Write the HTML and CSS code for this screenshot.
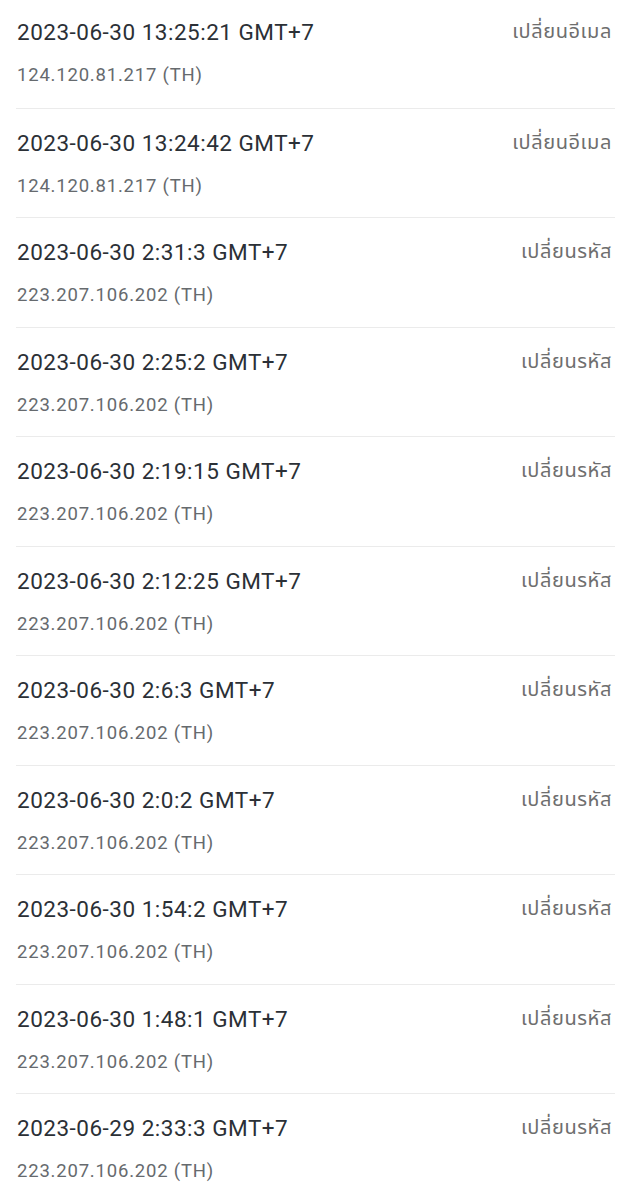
FILE: index.html
```html
<!DOCTYPE html>
<html lang="th">
<head>
    <meta charset="UTF-8">
    <meta name="viewport" content="width=device-width, initial-scale=1.0">
    <title>Login history</title>
    <link rel="stylesheet" href="styles.css">
</head>
<body>
    <div class="history">
        <div class="entry">
            <div class="entry-top">
                <span class="time">2023-06-30 13:25:21 GMT+7</span>
                <span class="action">เปลี่ยนอีเมล</span>
            </div>
            <div class="ip">124.120.81.217 (TH)</div>
        </div>
        <div class="entry">
            <div class="entry-top">
                <span class="time">2023-06-30 13:24:42 GMT+7</span>
                <span class="action">เปลี่ยนอีเมล</span>
            </div>
            <div class="ip">124.120.81.217 (TH)</div>
        </div>
        <div class="entry">
            <div class="entry-top">
                <span class="time">2023-06-30 2:31:3 GMT+7</span>
                <span class="action">เปลี่ยนรหัส</span>
            </div>
            <div class="ip">223.207.106.202 (TH)</div>
        </div>
        <div class="entry">
            <div class="entry-top">
                <span class="time">2023-06-30 2:25:2 GMT+7</span>
                <span class="action">เปลี่ยนรหัส</span>
            </div>
            <div class="ip">223.207.106.202 (TH)</div>
        </div>
        <div class="entry">
            <div class="entry-top">
                <span class="time">2023-06-30 2:19:15 GMT+7</span>
                <span class="action">เปลี่ยนรหัส</span>
            </div>
            <div class="ip">223.207.106.202 (TH)</div>
        </div>
        <div class="entry">
            <div class="entry-top">
                <span class="time">2023-06-30 2:12:25 GMT+7</span>
                <span class="action">เปลี่ยนรหัส</span>
            </div>
            <div class="ip">223.207.106.202 (TH)</div>
        </div>
        <div class="entry">
            <div class="entry-top">
                <span class="time">2023-06-30 2:6:3 GMT+7</span>
                <span class="action">เปลี่ยนรหัส</span>
            </div>
            <div class="ip">223.207.106.202 (TH)</div>
        </div>
        <div class="entry">
            <div class="entry-top">
                <span class="time">2023-06-30 2:0:2 GMT+7</span>
                <span class="action">เปลี่ยนรหัส</span>
            </div>
            <div class="ip">223.207.106.202 (TH)</div>
        </div>
        <div class="entry">
            <div class="entry-top">
                <span class="time">2023-06-30 1:54:2 GMT+7</span>
                <span class="action">เปลี่ยนรหัส</span>
            </div>
            <div class="ip">223.207.106.202 (TH)</div>
        </div>
        <div class="entry">
            <div class="entry-top">
                <span class="time">2023-06-30 1:48:1 GMT+7</span>
                <span class="action">เปลี่ยนรหัส</span>
            </div>
            <div class="ip">223.207.106.202 (TH)</div>
        </div>
        <div class="entry">
            <div class="entry-top">
                <span class="time">2023-06-29 2:33:3 GMT+7</span>
                <span class="action">เปลี่ยนรหัส</span>
            </div>
            <div class="ip">223.207.106.202 (TH)</div>
        </div>
    </div>
</body>
</html>
```

FILE: styles.css
```css
body {
    font-family: Roboto, "Noto Sans", "Noto Sans Thai", sans-serif;
    background-color: #ffffff;
    margin: 0;
    padding: 0;
    overflow: hidden;
}

.history {
    margin-top: -2px;
    padding: 0 13px 0 16px;
}

.entry {
    display: flex;
    flex-direction: column;
    padding: 19px 0 19.5px 1px;
    border-bottom: 1px solid #ebebeb;
}

.entry:first-child {
    padding-bottom: 20.5px;
}

.entry-top {
    display: flex;
    justify-content: space-between;
    align-items: center;
    height: 30px;
}

.time {
    font-size: 22.5px;
    letter-spacing: 0.5px;
    color: #2b3036;
}

.action {
    margin-right: 3px;
    font-size: 20px;
    letter-spacing: 0.6px;
    color: #6e6e6e;
}

.ip {
    margin-top: 16px;
    font-size: 18.5px;
    line-height: 24px;
    letter-spacing: 0.8px;
    color: #666a6e;
}
```
